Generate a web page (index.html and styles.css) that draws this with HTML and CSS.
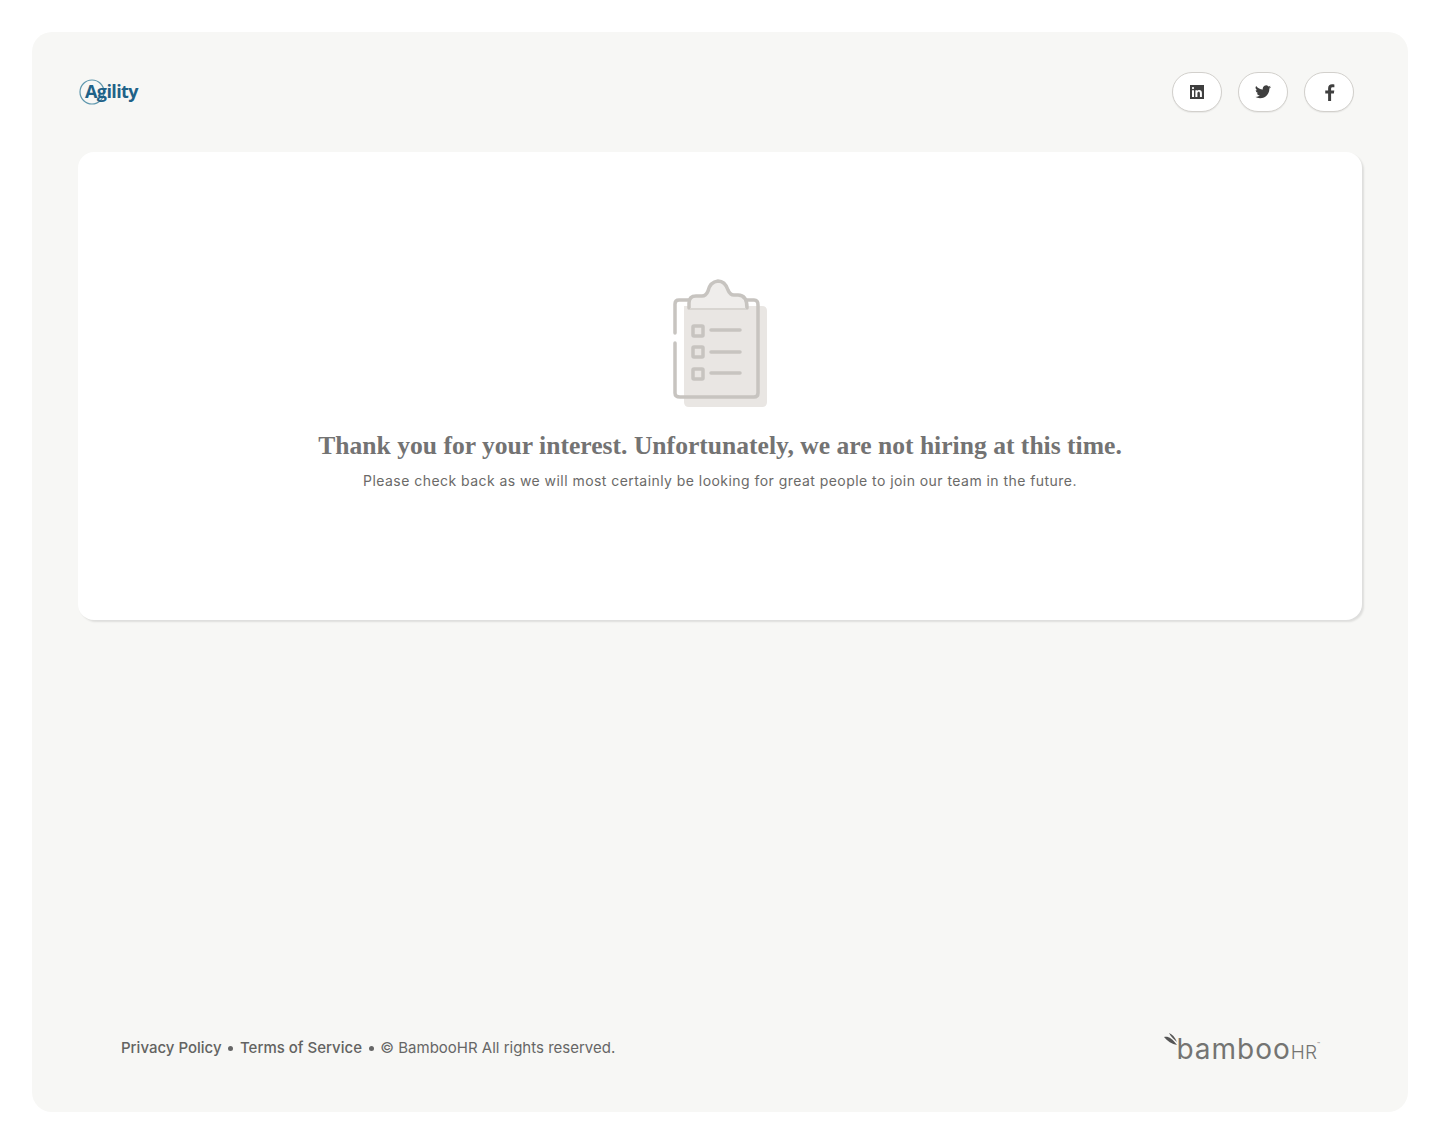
FILE: index.html
```html
<!DOCTYPE html>
<html lang="en">
<head>
    <meta charset="UTF-8">
    <title>Careers - Agility</title>
    <link rel="stylesheet" href="styles.css">
</head>
<body>
    <div class="panel">
        <header class="top">
            <a class="logo" href="#">
                <svg class="logo-ring" width="26" height="26" viewBox="0 0 26 26"><circle cx="13" cy="13" r="12" fill="none" stroke="#5f97ad" stroke-width="1.2"/></svg>
                <span class="logo-text">Agility</span>
            </a>
            <div class="social">
                <a class="social-btn" href="#" aria-label="LinkedIn">
                    <svg width="14" height="14" viewBox="0 0 14 14"><path fill="#3f3f3f" fill-rule="evenodd" d="M0 0h14v14H0zM2 5.200v6.800h2V5.200zM3 2a1.100 1.100 0 1 0 0 2.200A1.100 1.100 0 0 0 3 2zM5.400 5.200V12h2V8.400c0-1 .5-1.600 1.300-1.600s1.200.6 1.200 1.600V12h2V8c0-1.900-1-3-2.600-3-.9 0-1.600.4-1.900 1V5.200z"/></svg>
                </a>
                <a class="social-btn" href="#" aria-label="Twitter">
                    <svg width="16" height="14" viewBox="0 0 24 20"><path fill="#3f3f3f" d="M24 2.400a9.800 9.800 0 0 1-2.800.8A4.900 4.900 0 0 0 23.300.5a9.800 9.800 0 0 1-3.100 1.200 4.900 4.900 0 0 0-8.400 4.500A14 14 0 0 1 1.700.9a4.900 4.900 0 0 0 1.500 6.600 4.900 4.900 0 0 1-2.200-.6v.1a4.900 4.900 0 0 0 3.900 4.800 4.900 4.900 0 0 1-2.200.1 4.900 4.900 0 0 0 4.600 3.400A9.900 9.900 0 0 1 0 17.300 14 14 0 0 0 7.500 19.500c9.100 0 14-7.500 14-14v-.6A10 10 0 0 0 24 2.400z"/></svg>
                </a>
                <a class="social-btn" href="#" aria-label="Facebook">
                    <svg width="11" height="17" viewBox="0 0 10 16"><path fill="#3f3f3f" d="M6.500 16V9h2.600l.4-2.800h-3V4.400c0-.8.3-1.400 1.400-1.400h1.700V.4C9.300.3 8.400.2 7.400.2 5.200.2 3.700 1.500 3.700 4v2.200H1V9h2.700v7z"/></svg>
                </a>
            </div>
        </header>

        <main class="card">
            <svg class="clipboard" width="100" height="132" viewBox="0 0 100 132">
                <!-- soft shapes behind the outline -->
                <path fill="#e9e6e3" d="M14 28h78q5 0 5 5v91q0 5-5 5H19q-5 0-5-5z"/>
                <path fill="#efedeb" d="M19 31v-6q0-7 7-7h6q4 0 6-5 2-9 10-10 7 0 10 9 2 5 6 5h4c6 0 9 4 9 14z"/>
                <g fill="none" stroke="#c7c4c0" stroke-width="3.500" stroke-linecap="round" stroke-linejoin="round">
                    <path d="M5 55V26q0-4 4-4h9M76 22h8q4 0 4 5v88q0 4-4 4H10q-5 0-5-4V65"/>
                    <path d="M19 30v-5q0-7 7-7h6q4 0 6-5 2-9 10-10 7 0 10 9 2 5 6 5h4c6 0 9 4 9 13"/>
                    <rect x="23" y="48" width="10" height="10" rx="1"/>
                    <rect x="23" y="69" width="10" height="10" rx="1"/>
                    <rect x="23" y="91" width="10" height="10" rx="1"/>
                    <path d="M41 52h29M41 74h29M41 95h29"/>
                </g>
                <path d="M20 31h56" fill="none" stroke="#d8d5d1" stroke-width="2"/>
            </svg>
            <h1 class="title">Thank you for your interest. Unfortunately, we are not hiring at this time.</h1>
            <p class="sub">Please check back as we will most certainly be looking for great people to join our team in the future.</p>
        </main>

        <footer class="bottom">
            <div class="legal">
                <a href="#">Privacy Policy</a>
                <span class="dot"></span>
                <a href="#">Terms of Service</a>
                <span class="dot"></span>
                <span>© BambooHR All rights reserved.</span>
            </div>
            <div class="bamboo">
                <svg class="bamboo-leaf" width="14" height="13" viewBox="0 0 14 13"><path fill="#555" d="M0 4C4 3 8 5 13 12 8 11 3 8 0 4zM5 0c3 1 6 4 8 9-3-3-6-5-8-9z"/></svg>
                <span class="bamboo-name">bamboo</span><span class="bamboo-hr">HR</span><span class="bamboo-tm">™</span>
            </div>
        </footer>
    </div>
</body>
</html>
```

FILE: styles.css
```css
* {
    box-sizing: border-box;
}
body {
    margin: 0;
    padding: 32px;
    background-color: #fff;
    font-family: Inter, "Liberation Sans", sans-serif;
    color: #666;
}
a {
    color: inherit;
    text-decoration: none;
}
.panel {
    display: flex;
    flex-direction: column;
    height: 1080px;
    padding: 40px 46px 0 46px;
    background-color: #f7f7f5;
    border-radius: 20px;
}
.top {
    display: flex;
    align-items: center;
    justify-content: space-between;
    height: 40px;
    padding: 0 8px 0 1px;
}
.logo {
    position: relative;
    display: block;
    width: 60px;
    height: 26px;
}
.logo-ring {
    position: absolute;
    left: 0;
    top: 0;
}
.logo-text {
    position: absolute;
    left: 6px;
    top: 0;
    font-family: "Open Sans", sans-serif;
    font-size: 18px;
    line-height: 24px;
    font-weight: 700;
    letter-spacing: -0.6px;
    color: #1f6288;
}
.social {
    display: flex;
    gap: 16px;
}
.social-btn {
    display: flex;
    align-items: center;
    justify-content: center;
    width: 50px;
    height: 40px;
    background-color: #fff;
    border: 1px solid #d2d0cc;
    border-radius: 20px;
    box-shadow: 0 1px 1px rgba(0,0,0,0.06);
}
.card {
    display: flex;
    flex-direction: column;
    align-items: center;
    height: 468px;
    margin-top: 40px;
    padding-top: 126px;
    background-color: #fff;
    border-radius: 16px;
    box-shadow: 2px 2px 2px rgba(0,0,0,0.1);
}
.clipboard {
    display: block;
}
.title {
    margin: 19px 0 0 0;
    font-family: "Liberation Serif", serif;
    font-size: 25.6px;
    line-height: 34px;
    font-weight: 700;
    color: #737373;
}
.sub {
    margin: 8px 0 0 0;
    font-size: 14px;
    line-height: 20px;
    letter-spacing: 0.45px;
    color: #6b6a68;
}
.bottom {
    display: flex;
    align-items: center;
    justify-content: space-between;
    margin-top: auto;
    height: 64px;
    margin-bottom: 33px;
    padding: 0 42px 0 43px;
}
.legal {
    display: flex;
    align-items: center;
    gap: 6.7px;
    font-size: 15px;
    color: #666;
}
.legal a {
    font-weight: 500;
    color: #636361;
}
.dot {
    width: 5px;
    height: 5px;
    margin-top: 2px;
    background-color: #666;
    border-radius: 50%;
}
.bamboo {
    position: relative;
    display: flex;
    align-items: baseline;
    padding-top: 3px;
    padding-left: 12px;
    color: #747472;
}
.bamboo-leaf {
    position: absolute;
    left: 0;
    top: 5px;
}
.bamboo-name {
    font-size: 28px;
    line-height: 36px;
    font-weight: 400;
    letter-spacing: 1px;
}
.bamboo-hr {
    font-size: 19px;
    font-weight: 300;
}
.bamboo-tm {
    font-size: 5px;
    align-self: flex-start;
    margin-top: 10px;
}
```
